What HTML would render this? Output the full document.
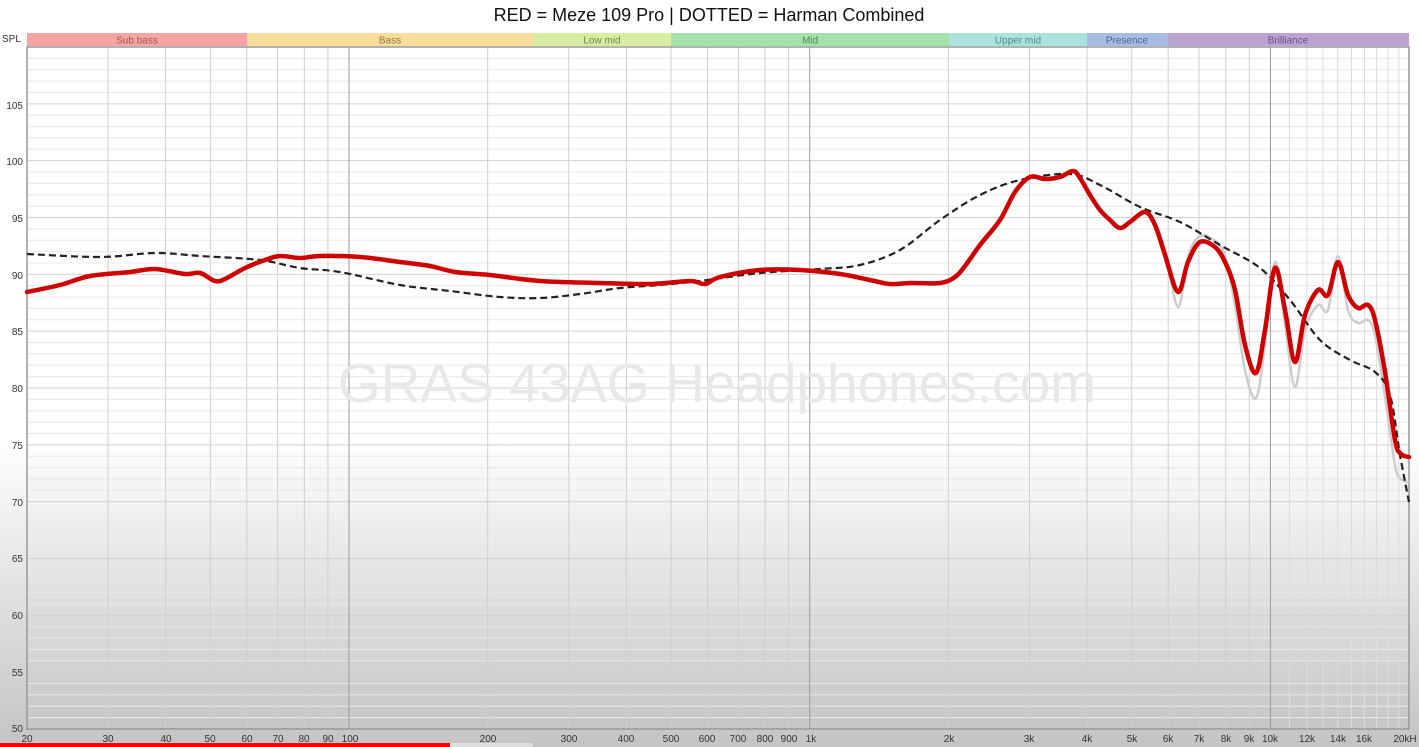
<!DOCTYPE html>
<html><head><meta charset="utf-8"><style>
html,body{margin:0;padding:0;width:1419px;height:747px;overflow:hidden;background:linear-gradient(#fff 0px,#fff 440px,#c4c4c4 747px);font-family:"Liberation Sans",sans-serif}
svg{position:absolute;left:0;top:0}
</style></head><body>
<svg id="s" width="1419" height="747" xmlns="http://www.w3.org/2000/svg">
<defs><linearGradient id="bg" x1="0" y1="0" x2="0" y2="1"><stop offset="0" stop-color="#fff"/><stop offset="0.57" stop-color="#fff"/><stop offset="1" stop-color="#c6c6c6"/></linearGradient></defs>
<text x="709" y="21" font-size="18" text-anchor="middle" fill="#111">RED = Meze 109 Pro | DOTTED = Harman Combined</text>
<g font-size="10">
<rect x="27" y="33" width="220" height="13" fill="#f6a3a3"/><text x="137" y="43.5" text-anchor="middle" fill="#a35454">Sub bass</text>
<rect x="247" y="33" width="286" height="13" fill="#f9de9b"/><text x="390" y="43.5" text-anchor="middle" fill="#8e7744">Bass</text>
<rect x="533" y="33" width="138" height="13" fill="#d6eda2"/><text x="602" y="43.5" text-anchor="middle" fill="#6f8a44">Low mid</text>
<rect x="671" y="33" width="278" height="13" fill="#a5e2a9"/><text x="810" y="43.5" text-anchor="middle" fill="#4e8a55">Mid</text>
<rect x="949" y="33" width="138" height="13" fill="#aae3dd"/><text x="1018" y="43.5" text-anchor="middle" fill="#4c8a85">Upper mid</text>
<rect x="1087" y="33" width="81" height="13" fill="#a7bbe3"/><text x="1127" y="43.5" text-anchor="middle" fill="#4f6696">Presence</text>
<rect x="1168" y="33" width="241" height="13" fill="#bba4d1"/><text x="1288" y="43.5" text-anchor="middle" fill="#6a4f86">Brilliance</text>
<text x="2" y="42" fill="#333">SPL</text>
</g>
<rect x="27" y="47" width="1382" height="682" fill="url(#bg)"/>
<g id="grid"></g>
<rect x="27" y="47" width="1382" height="682" fill="none" stroke="#999" stroke-width="1.5"/>
<text x="717" y="402" font-size="55" text-anchor="middle" fill="#e8e8e8">GRAS 43AG Headphones.com</text>
<g font-size="10" fill="#333" text-anchor="end">
<text x="23" y="109">105</text><text x="23" y="165">100</text><text x="23" y="222">95</text><text x="23" y="279">90</text><text x="23" y="335">85</text><text x="23" y="392">80</text><text x="23" y="449">75</text><text x="23" y="506">70</text><text x="23" y="562">65</text><text x="23" y="619">60</text><text x="23" y="676">55</text><text x="23" y="732">50</text>
</g>
<g font-size="10" fill="#333" text-anchor="middle">
<text x="27" y="742">20</text><text x="108" y="742">30</text><text x="166" y="742">40</text><text x="210" y="742">50</text><text x="247" y="742">60</text><text x="278" y="742">70</text><text x="304" y="742">80</text><text x="328" y="742">90</text><text x="350" y="742">100</text><text x="488" y="742">200</text><text x="569" y="742">300</text><text x="626" y="742">400</text><text x="671" y="742">500</text><text x="707" y="742">600</text><text x="738" y="742">700</text><text x="765" y="742">800</text><text x="789" y="742">900</text><text x="811" y="742">1k</text><text x="949" y="742">2k</text><text x="1029" y="742">3k</text><text x="1087" y="742">4k</text><text x="1132" y="742">5k</text><text x="1168" y="742">6k</text><text x="1199" y="742">7k</text><text x="1226" y="742">8k</text><text x="1249" y="742">9k</text><text x="1270" y="742">10k</text><text x="1307" y="742">12k</text><text x="1338" y="742">14k</text><text x="1364" y="742">16k</text><text x="1405" y="742">20kH</text>
</g>
<path id="gray" fill="none" stroke="#cdcdcd" stroke-width="2.5"/>
<path id="blk" fill="none" stroke="#222" stroke-width="2.2" stroke-dasharray="7,4"/>
<path id="red" fill="none" stroke="#d00000" stroke-width="4.5" stroke-linejoin="round" stroke-linecap="round"/>
<rect x="0" y="743" width="450" height="4" fill="#f00"/><rect x="450" y="743" width="83" height="4" fill="#ddd"/>
</svg>
<script>
var g=document.getElementById('grid'),h='';
function X(f){return 349+(Math.log10(f)-2)*460.7}
for(var d=0;d<=60;d++){var y=729-d*682/60;var maj=d%5==0;h+='<line x1="27" x2="1409" y1="'+y+'" y2="'+y+'" stroke="'+(maj?'#d2d2d2':'#e8e8e8')+'" stroke-width="1"/>';}
var fs=[];for(var dec=10;dec<=10000;dec*=10)for(var m=1;m<10;m++){var f=dec*m;if(f>=20&&f<=20000)fs.push(f)}
fs.forEach(function(f){var x=X(f),maj=(f==100||f==1000||f==10000);h+='<line x1="'+x+'" x2="'+x+'" y1="47" y2="729" stroke="'+(maj?'#9a9a9a':'#cfcfcf')+'" stroke-width="1"/>';});
[11000,12000,13000,14000,15000,16000,17000,18000,19000].forEach(function(f){var x=X(f);h+='<line x1="'+x+'" x2="'+x+'" y1="47" y2="729" stroke="#dcdcdc" stroke-width="1"/>';});
g.innerHTML=h;
function sm(p){var d='M'+p[0][0]+','+p[0][1];for(var i=0;i<p.length-1;i++){var p0=p[i-1]||p[i],p1=p[i],p2=p[i+1],p3=p[i+2]||p2;d+=' C'+(p1[0]+(p2[0]-p0[0])/6)+','+(p1[1]+(p2[1]-p0[1])/6)+' '+(p2[0]-(p3[0]-p1[0])/6)+','+(p2[1]-(p3[1]-p1[1])/6)+' '+p2[0]+','+p2[1];}return d}
var R=[[27,292],[60,285],[90,276],[130,272],[155,269],[185,274],[200,273],[215,281],[225,279],[245,268],[265,260],[280,256],[300,258],[320,256],[360,257],[400,262],[430,266],[455,272],[490,275],[540,281],[600,283],[650,284],[690,281],[705,284],[720,277],[760,270],[800,270],[840,274],[870,280],[890,284],[910,283],[940,283],[955,277],[965,266],[980,245],[1000,220],[1015,192],[1030,177],[1045,179],[1060,177],[1073,171],[1080,178],[1090,195],[1100,210],[1110,220],[1120,228],[1130,222],[1145,212],[1155,225],[1165,255],[1178,292],[1188,262],[1200,242],[1215,247],[1225,262],[1235,290],[1245,345],[1256,373],[1265,330],[1275,268],[1285,310],[1295,362],[1305,315],[1318,290],[1328,295],[1338,262],[1348,295],[1358,308],[1368,305],[1375,320],[1385,372],[1395,440],[1401,454],[1409,457]];
var G=R.map(function(p){var dy=0;if(p[0]>1160){if(p[1]>330)dy=25;else if(p[1]>280)dy=15;else if(p[1]<275)dy=-6;}return [p[0],p[1]+dy]});
var B=[[27,254],[100,257],[155,253],[200,256],[260,260],[300,268],[340,272],[400,285],[450,291],[500,297],[540,298],[580,294],[620,288],[660,285],[700,281],[760,273],[820,269],[860,265],[900,250],[940,220],[980,195],[1020,180],[1070,174],[1100,185],[1140,207],[1180,222],[1220,245],[1260,268],[1290,300],[1320,340],[1350,360],[1375,372],[1390,395],[1400,455],[1409,502]];
document.getElementById('red').setAttribute('d',sm(R));
document.getElementById('gray').setAttribute('d',sm(G));
document.getElementById('blk').setAttribute('d',sm(B));
</script>
</body></html>
